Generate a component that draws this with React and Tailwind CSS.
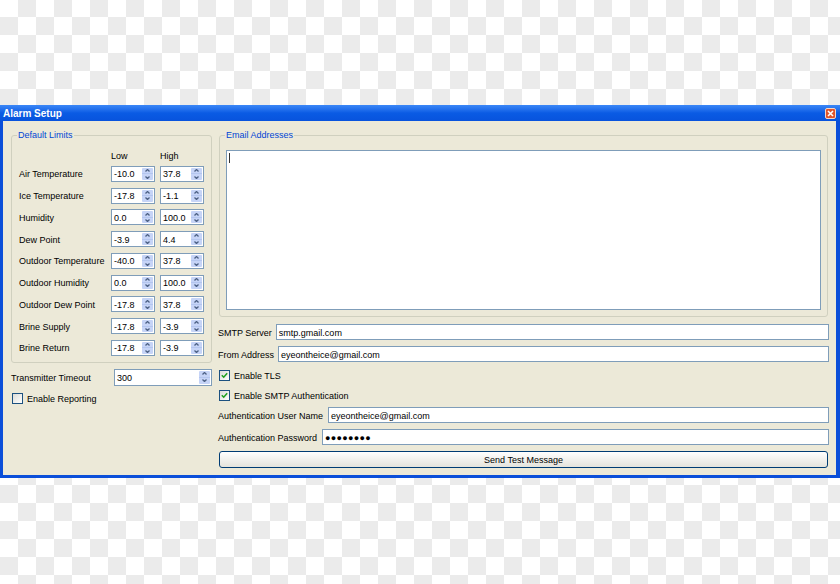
import React from 'react';

const limits = [
  ['Air Temperature', '-10.0', '37.8'],
  ['Ice Temperature', '-17.8', '-1.1'],
  ['Humidity', '0.0', '100.0'],
  ['Dew Point', '-3.9', '4.4'],
  ['Outdoor Temperature', '-40.0', '37.8'],
  ['Outdoor Humidity', '0.0', '100.0'],
  ['Outdoor Dew Point', '-17.8', '37.8'],
  ['Brine Supply', '-17.8', '-3.9'],
  ['Brine Return', '-17.8', '-3.9'],
];

function Arrow({ down }) {
  return (
    <svg width="5" height="3" viewBox="0 0 5 3" className="block">
      <path
        d={down ? 'M0.5 0.5L2.5 2.5L4.5 0.5' : 'M0.5 2.5L2.5 0.5L4.5 2.5'}
        fill="none"
        stroke="#4d6185"
        strokeWidth="1.3"
      />
    </svg>
  );
}

function Spin({ value, className }) {
  return (
    <div className={`flex h-[16px] items-stretch border border-[#7f9db9] bg-white ${className}`}>
      <span className="flex flex-1 items-center pl-[2px] pt-px">{value}</span>
      <div className="my-px mr-px flex w-[11px] flex-col rounded-[1px] bg-[#c6d4f7]">
        <div className="flex flex-1 items-center justify-center border-b border-[#b4c6ef]">
          <Arrow />
        </div>
        <div className="flex flex-1 items-center justify-center">
          <Arrow down />
        </div>
      </div>
    </div>
  );
}

function Check({ checked }) {
  return (
    <span className="flex h-[11px] w-[11px] shrink-0 items-center justify-center border border-[#1c5180] bg-gradient-to-br from-[#dcdcd7] to-white">
      {checked && (
        <svg width="7" height="7" viewBox="0 0 7 7">
          <path d="M0.8 3.3L2.7 5.2L6.2 1.2" fill="none" stroke="#21a121" strokeWidth="1.6" />
        </svg>
      )}
    </span>
  );
}

function Field({ children }) {
  return (
    <div className="flex h-[16px] flex-1 items-center border border-[#7f9db9] bg-white pl-[2px] pt-px">
      {children}
    </div>
  );
}

export default function App() {
  return (
    <div className="h-[584px] w-[840px] overflow-hidden bg-[image:conic-gradient(#ebebeb_25%,#fff_0_50%,#ebebeb_0_75%,#fff_0)] bg-[length:36px_36px] bg-[position:0_-1px] pt-[105px] font-['Liberation_Sans',Arial,sans-serif] text-[9px] leading-[12px] text-black">
      <div className="flex h-[373px] flex-col">
        {/* Title bar */}
        <div className="flex h-[16px] items-center justify-between bg-gradient-to-b from-[#3b87f7] via-[#0a5be4] to-[#0853dd] pl-[3px] pr-[4px]">
          <span className="pt-px text-[10px] font-bold text-white">Alarm Setup</span>
          <span className="flex h-[11px] w-[11px] items-center justify-center rounded-[2px] border border-[#f3d6c8] bg-[#e0542c]">
            <svg width="7" height="7" viewBox="0 0 7 7">
              <path d="M1 1L6 6M6 1L1 6" stroke="#fff" strokeWidth="1.6" />
            </svg>
          </span>
        </div>

        {/* Body */}
        <div className="flex flex-1 border-b-[3px] border-l-[3px] border-r-[4px] border-[#0b4fd9] bg-[#ece9d8] pl-[8px] pr-[7px] pt-[8px]">
          {/* Left column */}
          <div className="flex w-[201px] flex-col">
            <fieldset className="rounded-[3px] border border-[#d0d0bf] px-[7px] pb-[3px] pt-[8px]">
              <legend className="ml-[-2px] px-[1px] leading-[12px] text-[#0046d5]">Default Limits</legend>
              <div className="flex h-[12px] items-center gap-[5px] pt-px">
                <span className="flex-1" />
                <span className="w-[44px]">Low</span>
                <span className="w-[44px]">High</span>
              </div>
              <div className="mt-[2px] flex flex-col">
                {limits.map(([label, low, high]) => (
                  <div key={label} className="flex h-[21.75px] items-center gap-[5px]">
                    <span className="flex-1 whitespace-nowrap pt-px">{label}</span>
                    <Spin value={low} className="w-[44px]" />
                    <Spin value={high} className="w-[44px]" />
                  </div>
                ))}
              </div>
            </fieldset>

            <div className="mt-[6px] flex h-[17px] items-center">
              <span className="flex-1 pt-px">Transmitter Timeout</span>
              <Spin value="300" className="h-[17px] w-[98px]" />
            </div>

            <div className="mt-[7px] flex h-[12px] items-center gap-[4px] pl-px">
              <Check />
              <span className="pt-px">Enable Reporting</span>
            </div>
          </div>

          {/* Right column */}
          <div className="ml-[6px] flex flex-1 flex-col">
            <fieldset className="mx-px rounded-[3px] border border-[#d0d0bf] px-[6px] pb-[6px] pt-[9px]">
              <legend className="ml-[-1px] px-[1px] leading-[12px] text-[#0046d5]">Email Addresses</legend>
              <div className="h-[160px] border border-[#7f9db9] bg-white">
                <span className="ml-[2px] mt-[2px] block h-[10px] w-px bg-[#333]" />
              </div>
            </fieldset>

            <div className="mt-[7px] flex h-[16px] items-center gap-[4px]">
              <span className="whitespace-nowrap pt-px">SMTP Server</span>
              <Field>smtp.gmail.com</Field>
            </div>
            <div className="mt-[6px] flex h-[16px] items-center gap-[4px]">
              <span className="whitespace-nowrap pt-px">From Address</span>
              <Field>eyeontheice@gmail.com</Field>
            </div>
            <div className="mt-[7px] flex h-[12px] items-center gap-[4px] pl-px">
              <Check checked />
              <span className="pt-px">Enable TLS</span>
            </div>
            <div className="mt-[8px] flex h-[12px] items-center gap-[4px] pl-px">
              <Check checked />
              <span className="pt-px">Enable SMTP Authentication</span>
            </div>
            <div className="mt-[6px] flex h-[16px] items-center gap-[5px]">
              <span className="whitespace-nowrap pt-px">Authentication User Name</span>
              <Field>eyeontheice@gmail.com</Field>
            </div>
            <div className="mt-[6px] flex h-[16px] items-center gap-[5px]">
              <span className="whitespace-nowrap pt-px">Authentication Password</span>
              <Field>
                <span className="text-[9px] tracking-[0.3px]">●●●●●●●●</span>
              </Field>
            </div>
            <div className="mx-px mt-[6px] flex h-[17px] items-center justify-center rounded-[3px] border border-[#003c74] bg-gradient-to-b from-white to-[#e4e3dc] pt-px">
              Send Test Message
            </div>
          </div>
        </div>
      </div>
    </div>
  );
}
